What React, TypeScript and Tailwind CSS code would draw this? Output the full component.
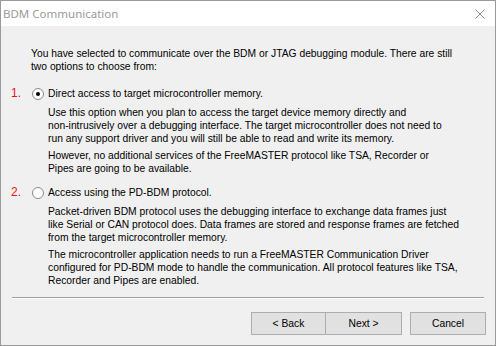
const intro = [
  'You have selected to communicate over the BDM or JTAG debugging module. There are still',
  'two options to choose from:',
]

const options = [
  {
    num: '1.',
    checked: true,
    label: 'Direct access to target microcontroller memory.',
    paras: [
      [
        'Use this option when you plan to access the target device memory directly and',
        'non-intrusively over a debugging interface. The target microcontroller does not need to',
        'run any support driver and you will still be able to read and write its memory.',
      ],
      [
        'However, no additional services of the FreeMASTER protocol like TSA, Recorder or',
        'Pipes are going to be available.',
      ],
    ],
  },
  {
    num: '2.',
    checked: false,
    label: 'Access using the PD-BDM protocol.',
    paras: [
      [
        'Packet-driven BDM protocol uses the debugging interface to exchange data frames just',
        'like Serial or CAN protocol does. Data frames are stored and response frames are fetched',
        'from the target microcontroller memory.',
      ],
      [
        'The microcontroller application needs to run a FreeMASTER Communication Driver',
        'configured for PD-BDM mode to handle the communication. All protocol features like TSA,',
        'Recorder and Pipes are enabled.',
      ],
    ],
  },
]

function Radio({ checked }: { checked: boolean }) {
  return (
    <span className="w-[12px] h-[12px] rounded-full border border-[#8a8a8a] bg-white flex items-center justify-center shrink-0">
      {checked && <span className="w-[4px] h-[4px] rounded-full bg-black" />}
    </span>
  )
}

export default function App() {
  const body = "font-['Liberation_Sans',Arial,sans-serif] text-[10.3px] leading-[13px] text-black whitespace-nowrap"

  return (
    <div className="w-[496px] h-[346px] bg-[#f0f0f0] border border-[#9a9a9a] flex flex-col overflow-hidden">
      {/* Title bar */}
      <div className="h-[25px] bg-white flex items-center justify-between pl-[2px] pr-[10px] shrink-0">
        <span className="font-['Noto_Sans',sans-serif] text-[11.5px] text-[#9a9a9a]">BDM Communication</span>
        <svg width="10" height="10" viewBox="0 0 10 10" className="text-[#8a8a8a]">
          <path d="M0.5 0.5 L9.5 9.5 M9.5 0.5 L0.5 9.5" stroke="currentColor" strokeWidth="1" />
        </svg>
      </div>

      <div className={`flex-1 flex flex-col ${body}`}>
        <div className="pl-[30px] pt-[21px]">
          {intro.map((l, i) => (
            <div key={i}>{l}</div>
          ))}
        </div>

        {options.map((o, idx) => (
          <div key={o.num} className={`flex pl-[10px] ${idx === 0 ? 'pt-[14px]' : 'pt-[11px]'}`}>
            <span className="w-[21px] text-[#e81123] text-[12px]">{o.num}</span>
            <div className="flex flex-col">
              <div className="flex items-center gap-[4px]">
                <Radio checked={o.checked} />
                <span>{o.label}</span>
              </div>
              <div className="pl-[16px] pt-[6px] flex flex-col gap-[4px]">
                {o.paras.map((p, j) => (
                  <div key={j}>
                    {p.map((l, k) => (
                      <div key={k}>{l}</div>
                    ))}
                  </div>
                ))}
              </div>
            </div>
          </div>
        ))}

        <div className="mt-auto mx-[11px] border-t border-[#a0a0a0] border-b border-b-white" />

        {/* Buttons */}
        <div className="flex justify-end pr-[9px] pt-[13px] pb-[10px]">
          <button className="w-[75px] h-[23px] bg-[#e1e1e1] border border-[#adadad]">&lt; Back</button>
          <button className="w-[77px] h-[23px] bg-[#e1e1e1] border border-[#adadad] ml-[-1px]">Next &gt;</button>
          <button className="w-[76px] h-[23px] bg-[#e1e1e1] border border-[#adadad] ml-[8px]">Cancel</button>
        </div>
      </div>
    </div>
  )
}
